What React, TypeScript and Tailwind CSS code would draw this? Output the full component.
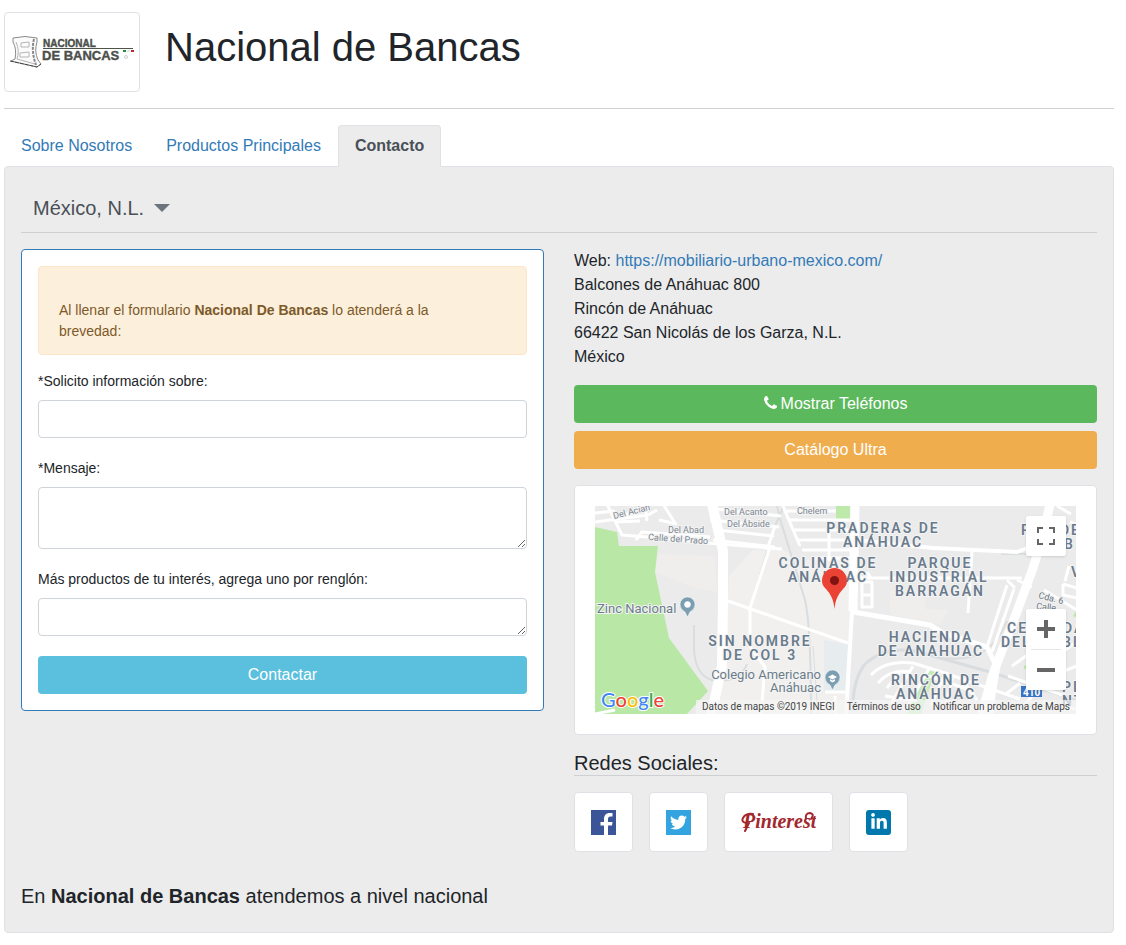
import { FaLinkedinIn, FaTwitter } from 'react-icons/fa'

interface MapLabel {
  x: number
  y: number
  text: string
}

const tabs = [
  { label: 'Sobre Nosotros', active: false },
  { label: 'Productos Principales', active: false },
  { label: 'Contacto', active: true },
]

const address = [
  'Balcones de Anáhuac 800',
  'Rincón de Anáhuac',
  '66422 San Nicolás de los Garza, N.L.',
  'México',
]

const districts: MapLabel[] = [
  { x: 288, y: 27, text: 'PRADERAS DE' },
  { x: 288, y: 41, text: 'ANÁHUAC' },
  { x: 233, y: 62, text: 'COLINAS DE' },
  { x: 233, y: 76, text: 'ANÁHUAC' },
  { x: 345, y: 62, text: 'PARQUE' },
  { x: 344, y: 76, text: 'INDUSTRIAL' },
  { x: 345, y: 90, text: 'BARRAGÁN' },
  { x: 336, y: 136, text: 'HACIENDA' },
  { x: 336, y: 150, text: 'DE ANAHUAC' },
  { x: 165, y: 140, text: 'SIN NOMBRE' },
  { x: 165, y: 154, text: 'DE COL 3' },
  { x: 341, y: 179, text: 'RINCÓN DE' },
  { x: 341, y: 193, text: 'ANÁHUAC' },
]

// labels partly hidden by the controls or the edge of the map
const edgeDistricts: MapLabel[] = [
  { x: 426, y: 29, text: 'P' },
  { x: 465, y: 29, text: 'DE' },
  { x: 469, y: 43, text: 'B.' },
  { x: 476, y: 71, text: 'V' },
  { x: 412, y: 127, text: 'CE' },
  { x: 468, y: 127, text: 'DA' },
  { x: 406, y: 141, text: 'DEL' },
  { x: 467, y: 141, text: 'BL' },
  { x: 467, y: 186, text: 'PI' },
  { x: 467, y: 200, text: 'NT' },
]

function Logo() {
  return (
    <svg viewBox="0 0 134 78" className="h-full w-full" role="img" aria-label="Nacional de Bancas">
      <g fill="none" stroke="#8a8a8a" strokeWidth="1" strokeLinejoin="round">
        <path d="M8 25Q20 22 32 25L32 29Q29 38 33 47L36 51L32 54L6 48L10 46Q12 36 8 29Z" fill="#fbfbfb" />
        <path d="M29 26Q26 38 31 52" strokeWidth="2" strokeDasharray="3 1" />
        <path d="M11 29Q15 38 12 46L30 51" stroke="#b5b5b5" />
        <path d="M16 30L24 29V34L16 34ZM15 40L24 39V44L15 44Z" stroke="#b5b5b5" />
        <path d="M5 48L32 54L36 51" stroke="#444" strokeDasharray="4 1" />
      </g>
      <g fill="#4d4f4b" stroke="#4d4f4b" strokeWidth="0.400" fontFamily="Liberation Sans, sans-serif" fontWeight="700">
        <text x="38" y="34" fontSize="10">NACIONAL</text>
        <text x="37" y="47" fontSize="13">DE BANCAS</text>
      </g>
      <path d="M38 35.500H128" stroke="#4d5548" />
      <path d="M118 38H121" stroke="#1f8a43" strokeWidth="2" />
      <path d="M122 38H125" stroke="#e6e6e6" strokeWidth="2" />
      <path d="M126 38H129" stroke="#c0272d" strokeWidth="2" />
      <circle cx="121" cy="44" r="1.500" fill="none" stroke="#999" strokeWidth="0.500" />
    </svg>
  )
}

function PhoneIcon() {
  return (
    <svg viewBox="0 128 1408 1408" className="mr-1 inline h-[13px] w-[13px] align-baseline" fill="currentColor" aria-hidden="true">
      <path d="M1408 1240q0 27-10 70.500t-21 68.500q-21 50-122 106-94 51-186 51-27 0-53-3.500t-57.500-12.500-47-14.500-55.500-20.500-49-18q-98-35-175-83-127-79-264-216t-216-264q-48-77-83-175-3-9-18-49t-20.500-55.500-14.500-47-12.500-57.500-3.500-53q0-92 51-186 56-101 106-122 25-11 68.500-21t70.500-10q14 0 21 3 18 6 53 76 11 19 30 54t35 63.500 31 53.500q3 4 17.500 25t21.500 35.500 7 28.500q0 20-28.500 50t-62 55-62 53-28.500 46q0 9 5 22.500t8.500 20.500 14 24 11.500 19q76 137 174 235t235 174q2 1 19 11.500t24 14 20.500 8.500 22.500 5q18 0 46-28.500t53-62 55-62 50-28.500q14 0 28.500 7t35.500 21.500 25 17.500q25 15 53.500 31t63.500 35 54 30q70 35 76 53 3 7 3 21z" />
    </svg>
  )
}

function MapDrawing() {
  return (
    <svg viewBox="0 0 481 208" preserveAspectRatio="xMidYMid slice" className="h-full w-full" role="img" aria-label="Mapa de ubicación">
      <rect width="481" height="208" fill="#ebebeb" />
      <path d="M63 48L120 50L122 86L100 82L60 66Z" fill="#efeeed" />
      <path d="M134 70L158 44L188 44L207 54L254 52L256 105L252 208H123L133 95Z" fill="#f1f0ef" />
      <path d="M295 84H330V103L354 104L345 118L330 115L295 109Z" fill="#efeeed" />
      <path d="M0 21L22 26L24 40H63L60 66L74 132L113 185L92 208H0Z" fill="#b9e8a6" />
      <path d="M229 134L253 138L250 187H229Z" fill="#e7ecef" />
      <path d="M241 0H255V13H241Z" fill="#bdeaab" />
      <path d="M333 164L340 166L326 208H312Z" fill="#c3ebb3" />
      <path d="M429 160L434 157V163H429ZM478 110L482 103V112Z" fill="#bdeaab" />

      {/* Railways */}
      <g fill="none" stroke="#d9dddf" strokeWidth="2">
        <path d="M182 0L186 16L210 94Q216 120 216 208" />
        <path d="M223 208L218 140" strokeWidth="1" />
        <path d="M99 119V143Q100 169 117 174Q145 178 152 158" />
        <path d="M188 2L180 20L155 102V145" />
        <path d="M258 205Q257 175 270 158Q290 140 320 145L395 166L481 194" strokeWidth="3" />
        <path d="M350 152Q395 158 412 115" />
        <path d="M406 48H438" />
      </g>

      <g fill="none" stroke="#fff" strokeLinejoin="round">
        {/* Avenues */}
        <path d="M117 -2L128 45V95L127 160L116 210" strokeWidth="10" />
        <path d="M260 -2L258 105" strokeWidth="9" />
        <path d="M258 106L335 119L348 127L392 141L401 160L396 208" strokeWidth="5" />
        <path d="M455 -2L448 30L437 65L421 108L398 168L386 210" strokeWidth="9" />
        <path d="M401 160L392 210" strokeWidth="9" />
        <path d="M257 105L251 210" strokeWidth="4" />
        <path d="M133 95L253 137" strokeWidth="3" />
        <path d="M260 34L338 42L422 46L435 41" strokeWidth="4" />
        {/* Streets */}
        <g strokeWidth="3">
          <path d="M12 -2L20 15L27 29L65 32L112 37L187 43" />
          <path d="M0 16L53 9L62 4M25 9L52 5M41 34L47 26L115 31M64 14L82 18M68 -2L80 17M50 -2L52 15" />
          <path d="M0 7L20 5M20 16L45 15" />
          <path d="M120 3L186 10M115 14L184 21M122 24L179 30M118 34L180 41" />
          <path d="M172 44L180 20M175 41L155 102V141L170 161L166 208" />
          <path d="M188 0L205 40M191 5H241M194 14H255M199 24H257M202 34H257M207 44H257M217 52H257" />
          <path d="M218 -2V5M234 13V55M247 13V24" />
          <path d="M262 72H427M272 66L276 72M377 46L373 107" />
          <path d="M267 76H277V101H267ZM267 89H277" />
          <path d="M412 79L392 141M419 83L397 146M412 74L420 82" />
          <path d="M276 169Q290 154 318 157L350 167L425 193" />
          <path d="M283 177Q296 162 316 166M292 182L305 166M296 198L318 160M310 205L334 163M350 168L336 200M358 170L350 202M366 172L382 194M334 170L375 184M290 190L322 195" />
          <path d="M230 186H250M240 190V208M0 208L20 204" />
          <path d="M422 74L437 81M449 84L482 104M468 78L482 82M468 78V89L482 92M474 60L470 75M475 16L482 19M462 0L476 8M457 14L477 25" />
          <path d="M413 170L470 190M417 160L431 150L446 152M425 204L455 170L482 160M448 196L481 203M411 188L425 177M469 145L482 135" />
        </g>
      </g>

      <g fontFamily="Roboto, sans-serif" fill="#7c8792" stroke="#f4f4f4" strokeWidth="2" paintOrder="stroke" fontSize="9">
        <text x="19" y="13" transform="rotate(-14 19 13)">Del Acian</text>
        <text x="129" y="9">Del Acanto</text>
        <text x="132" y="21">Del Ábside</text>
        <text x="202" y="8">Chelem</text>
        <text x="73" y="27">Del Abad</text>
        <text x="53" y="34" transform="rotate(4 53 34)">Calle del Prado</text>
        <text x="443" y="92" fill="#66727e" transform="rotate(14 443 92)">Cda. 6</text>
        <text x="441" y="103" fill="#66727e" transform="rotate(6 441 103)">Calle</text>
      </g>

      <g fontFamily="Roboto, sans-serif" fontWeight="600" fontSize="14" fill="#6a7b8c" stroke="#f4f4f4" strokeWidth="2" paintOrder="stroke" className="tracking-[2px]">
        {districts.map((d) => (
          <text key={`${d.text}-${d.x}-${d.y}`} x={d.x} y={d.y} textAnchor="middle">{d.text}</text>
        ))}
        {edgeDistricts.map((d) => (
          <text key={`${d.text}-${d.x}-${d.y}`} x={d.x} y={d.y}>{d.text}</text>
        ))}
      </g>

      <g fontFamily="Roboto, sans-serif" fontSize="13" fill="#6b7d8a" stroke="#f4f4f4" strokeWidth="2" paintOrder="stroke">
        <text x="2" y="107">Zinc Nacional</text>
        <text x="226" y="173" textAnchor="end">Colegio Americano</text>
        <text x="226" y="186" textAnchor="end">Anáhuac</text>
      </g>

      {/* Places */}
      <g fill="#7b9eb0" stroke="#fff" strokeWidth="0.500">
        <path d="M92.500 111L90 106Q85 103 85 98.500A7.500 7.500 0 0 1 100 98.500Q100 103 95 106Z" />
        <circle cx="92.500" cy="98.500" r="3" fill="#fff" />
        <path d="M237.500 184L235 179Q230 176 230 171.500A7.500 7.500 0 0 1 245 171.500Q245 176 240 179Z" />
        <path d="M233 171L237.500 168.500L242 171L237.500 173.500ZM235 173V175L237.500 176.500L240 175V173L237.500 174.500Z" fill="#fff" stroke="none" />
      </g>

      <rect x="426" y="180" width="21" height="11" fill="#3971c4" />
      <text x="428" y="190" fontFamily="Roboto, sans-serif" fontSize="10" fontWeight="700" fill="#fff">410</text>

      {/* Location pin */}
      <path d="M239.500 103C238.500 93 235.500 88 231 83C228 80 227 78 227 74.500A12.500 12.500 0 0 1 252 74.500C252 78 251 80 248 83C243.500 88 240.500 93 239.500 103Z" fill="#ea4335" />
      <circle cx="239.500" cy="74.500" r="4.500" fill="#811411" />

      <text x="6" y="201" fontFamily="Lato, sans-serif" fontSize="20" fontWeight="500" stroke="#fff" strokeWidth="2" paintOrder="stroke">
        <tspan fill="#4285f4">G</tspan>
        <tspan fill="#ea4335">o</tspan>
        <tspan fill="#fbbc05">o</tspan>
        <tspan fill="#4285f4">g</tspan>
        <tspan fill="#34a853">l</tspan>
        <tspan fill="#ea4335">e</tspan>
      </text>
    </svg>
  )
}

function LocationMap() {
  return (
    <div className="relative h-52 overflow-hidden">
      <MapDrawing />

      <button type="button" aria-label="Pantalla completa" className="absolute top-[10px] right-[10px] flex h-10 w-10 items-center justify-center rounded-xs bg-white shadow">
        <svg viewBox="0 0 18 18" className="h-[18px] w-[18px]" fill="#666">
          <path d="M0 0V6H2V2H6V0ZM12 0V2H16V6H18V0ZM16 16H12V18H18V12H16ZM2 12H0V18H6V16H2Z" />
        </svg>
      </button>

      <div className="absolute right-[10px] bottom-6 flex w-10 flex-col items-center rounded-xs bg-white shadow">
        <button type="button" aria-label="Acercar" className="flex h-10 w-10 items-center justify-center">
          <svg viewBox="0 0 18 18" className="h-[18px] w-[18px]" fill="#666">
            <path d="M7 0H11V7H18V11H11V18H7V11H0V7H7Z" />
          </svg>
        </button>
        <div className="h-px w-[30px] bg-[#e6e6e6]" />
        <button type="button" aria-label="Alejar" className="flex h-10 w-10 items-center justify-center">
          <svg viewBox="0 0 18 18" className="h-[18px] w-[18px]" fill="#666">
            <path d="M0 7H18V11H0Z" />
          </svg>
        </button>
      </div>

      <div className="absolute right-0 bottom-0 flex font-[Roboto,sans-serif] text-[10px] leading-[14px] whitespace-nowrap text-[#444]">
        <span className="bg-[#f5f5f5]/70 px-[6px]">Datos de mapas ©2019 INEGI</span>
        <a href="#terminos" className="bg-[#f5f5f5]/70 px-[6px]">Términos de uso</a>
        <a href="#reportar" className="bg-[#f5f5f5]/70 px-[6px]">Notificar un problema de Maps</a>
      </div>
    </div>
  )
}

function ContactForm() {
  return (
    <form className="flex flex-col gap-5 rounded border border-[#337ab7] bg-white p-4 text-sm leading-[21px]">
      <div>
        <div className="mb-4 rounded border border-[#fde5c8] bg-[#fcefdc] pt-[33px] pr-12 pb-3 pl-5 text-[#7d5a29]">
          Al llenar el formulario <b>Nacional De Bancas</b> lo atenderá a la brevedad:
        </div>
        <label htmlFor="asunto" className="mb-2 block">*Solicito información sobre:</label>
        <input id="asunto" type="text" className="block h-[38px] w-full rounded border border-[#ced4da] bg-white px-3" />
      </div>
      <div>
        <label htmlFor="mensaje" className="mb-2 block">*Mensaje:</label>
        <textarea id="mensaje" className="block h-[62px] w-full rounded border border-[#ced4da] bg-white px-3 py-1" />
      </div>
      <div>
        <label htmlFor="productos" className="mb-2 block">Más productos de tu interés, agrega uno por renglón:</label>
        <textarea id="productos" className="block h-[38px] w-full rounded border border-[#ced4da] bg-white px-3 py-1" />
      </div>
      <button type="button" className="h-[38px] rounded bg-[#5bc0de] text-base text-white">Contactar</button>
    </form>
  )
}

function SocialLinks() {
  const card = 'flex h-[60px] items-center rounded border border-[#dee2e6] bg-white px-4'

  return (
    <div className="flex flex-wrap gap-4">
      <a href="#facebook" aria-label="Facebook" className={card}>
        <svg viewBox="0 0 25 25" className="h-[25px] w-[25px]">
          <rect width="25" height="25" fill="#3b5598" />
          <path d="M13 25V15.500H9.500V12H13V9C13 5 15.500 3 18.500 3H21.500V6.500H19.500C17.800 6.500 17 7.400 17 9V12H21.500L21 15.500H17V25Z" fill="#fff" />
        </svg>
      </a>
      <a href="#twitter" aria-label="Twitter" className={card}>
        <span className="flex h-[25px] w-[25px] items-center justify-center bg-[#33a4df] text-white">
          <FaTwitter size={17} />
        </span>
      </a>
      <a href="#pinterest" aria-label="Pinterest" className={card}>
        <svg viewBox="0 0 75 25" className="h-[25px] w-[75px]">
          <text x="2" y="18" fontFamily="Liberation Serif, serif" fontStyle="italic" fontWeight="700" fontSize="20" fill="#a3282e">Pinterest</text>
          <path d="M5 13Q0 12 2 8Q5 3 12 4M65 9Q64 3 69 3Q74 4 70 9M4 21L8 13" fill="none" stroke="#a3282e" strokeWidth="2" strokeLinecap="round" />
        </svg>
      </a>
      <a href="#linkedin" aria-label="LinkedIn" className={card}>
        <span className="flex h-[25px] w-[25px] items-center justify-center rounded-[3px] bg-[#0077ad] text-white">
          <FaLinkedinIn size={18} />
        </span>
      </a>
    </div>
  )
}

export default function App() {
  return (
    <div className="pt-3 pr-3 pb-3 pl-1 font-['Liberation_Sans',Arial,sans-serif] text-base text-[#212529]">
      <header className="flex items-start gap-[25px] border-b border-[#cfd0d1] pb-4">
        <div className="h-20 w-[136px] shrink-0 rounded border border-[#dee2e6] bg-white">
          <Logo />
        </div>
        <h1 className="pt-[11px] text-[40px] leading-[48px]">Nacional de Bancas</h1>
      </header>

      <nav className="relative mt-4 -mb-px flex">
        {tabs.map((tab) => (
          <a
            key={tab.label}
            href="#contacto"
            className={
              tab.active
                ? 'rounded-t border border-[#dee2e6] border-b-[#ececec] bg-[#ececec] px-4 py-2 font-bold text-[#495057]'
                : 'px-[17px] py-[9px] text-[#337ab7]'
            }
          >
            {tab.label}
          </a>
        ))}
      </nav>

      <main className="rounded border border-[#dee2e6] bg-[#ececec] px-4 pt-[26px] pb-6">
        <div className="border-b border-[#cfd0d1] pb-[9px]">
          <button type="button" className="flex items-center gap-[10px] pl-3 text-xl leading-[30px] text-[#495057]">
            México, N.L.
            <svg viewBox="0 0 16 8" className="h-2 w-4" fill="#6c757d" aria-hidden="true">
              <path d="M0 0H16L8 8Z" />
            </svg>
          </button>
        </div>

        <div className="mt-4 grid grid-cols-2 items-start gap-[30px]">
          <ContactForm />

          <section>
            <p>
              Web: <a href="https://mobiliario-urbano-mexico.com/" className="text-[#337ab7]">https://mobiliario-urbano-mexico.com/</a>
            </p>
            {address.map((line) => (
              <p key={line}>{line}</p>
            ))}

            <div className="my-4 flex flex-col gap-2">
              <button type="button" className="h-[38px] rounded bg-[#5cb85c] text-white">
                <PhoneIcon />
                Mostrar Teléfonos
              </button>
              <button type="button" className="h-[38px] rounded bg-[#f0ad4e] text-white">Catálogo Ultra</button>
            </div>

            <div className="rounded border border-[#dee2e6] bg-white p-5">
              <LocationMap />
            </div>

            <h2 className="mt-4 mb-4 border-b border-[#cfd0d1] text-xl leading-6">Redes Sociales:</h2>
            <SocialLinks />
          </section>
        </div>

        <p className="mt-8 text-xl leading-6">
          En <b>Nacional de Bancas</b> atendemos a nivel nacional
        </p>
      </main>
    </div>
  )
}
